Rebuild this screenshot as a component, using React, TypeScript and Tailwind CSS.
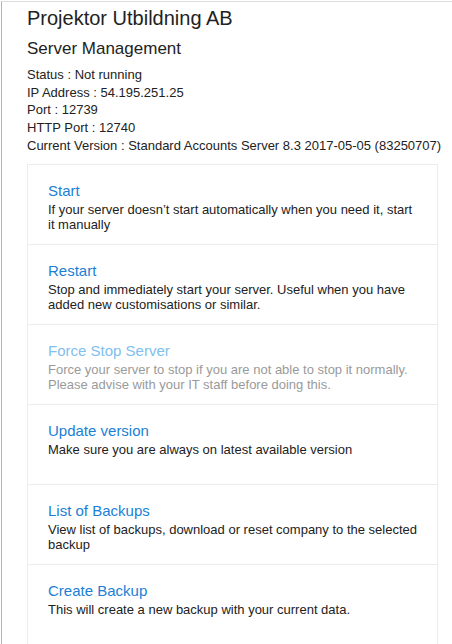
const ACTIONS = [
  {
    id: 'start',
    label: 'Start',
    description: 'If your server doesn’t start automatically when you need it, start it manually',
  },
  {
    id: 'restart',
    label: 'Restart',
    description: 'Stop and immediately start your server. Useful when you have added new customisations or similar.',
  },
  {
    id: 'force-stop',
    label: 'Force Stop Server',
    description: 'Force your server to stop if you are not able to stop it normally. Please advise with your IT staff before doing this.',
    disabled: true,
  },
  {
    id: 'update',
    label: 'Update version',
    description: 'Make sure you are always on latest available version',
  },
  {
    id: 'backups',
    label: 'List of Backups',
    description: 'View list of backups, download or reset company to the selected backup',
  },
  {
    id: 'create-backup',
    label: 'Create Backup',
    description: 'This will create a new backup with your current data.',
  },
];

const INFO = [
  ['Status', 'Not running'],
  ['IP Address', '54.195.251.25'],
  ['Port', '12739'],
  ['HTTP Port', '12740'],
  ['Current Version', 'Standard Accounts Server 8.3 2017-05-05 (83250707)'],
];

export default function App() {
  return (
    <div
      className="w-[452px] h-[644px] overflow-hidden bg-white text-[#222]"
      style={{ fontFamily: '"Liberation Sans", Arial, sans-serif' }}
    >
      <div className="ml-px mt-px h-full border-l border-t border-l-[#b5b5b5] border-t-[#dedede] pl-[25px]">
        <h1 className="text-[20px] leading-[24px] pt-[4px]">Projektor Utbildning AB</h1>
        <h2 className="text-[17px] leading-[20px] mt-[9px]">Server Management</h2>

        <div className="mt-[7px] text-[13px] leading-[17.7px] whitespace-nowrap">
          {INFO.map(([k, v]) => (
            <div key={k}>
              {k} : {v}
            </div>
          ))}
        </div>

        <div className="mt-[9px] w-[411px] border-l border-r border-t border-[#ececec]">
          {ACTIONS.map((a) => (
            <div
              key={a.id}
              className="h-[80px] border-b border-[#ececec] pl-[20px] pr-[16px] pt-[17px] cursor-pointer"
            >
              <div
                className={`text-[15px] leading-[18px] ${a.disabled ? 'text-[#7fc0ee]' : 'text-[#1b7fd6]'}`}
              >
                {a.label}
              </div>
              <p
                className={`mt-[2px] text-[13px] leading-[15px] ${a.disabled ? 'text-[#9a9a9a]' : 'text-[#222]'}`}
              >
                {a.description}
              </p>
            </div>
          ))}
        </div>
      </div>
    </div>
  );
}
